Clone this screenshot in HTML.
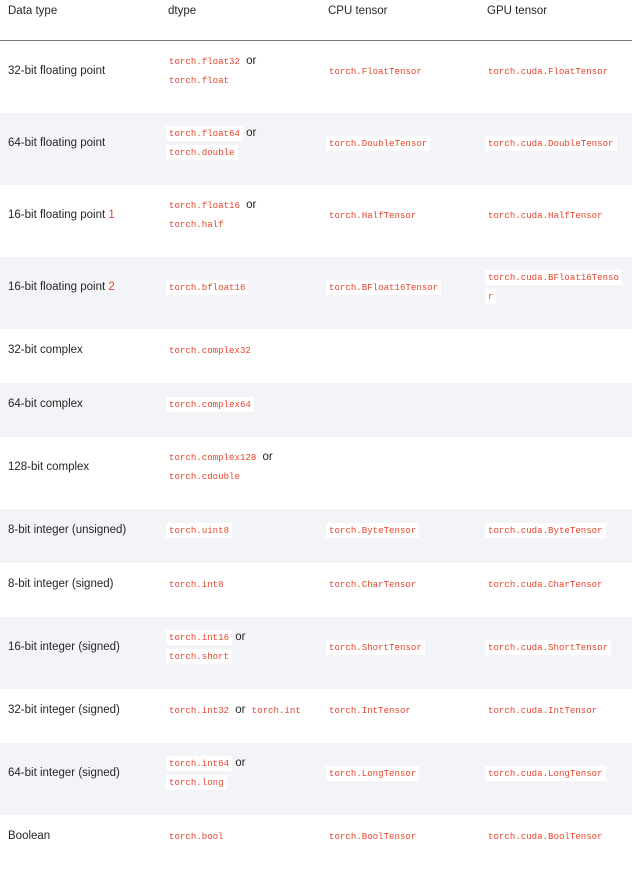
<!DOCTYPE html>
<html><head><meta charset="utf-8"><style>
*{margin:0;padding:0;box-sizing:border-box}
body{width:632px;height:862px;overflow:hidden;background:#fff;font-family:"Liberation Sans",sans-serif;font-size:11.5px;color:#262626}
.row{position:relative;width:632px}
.hdr{border-bottom:1px solid #7a7a7a}
.g{background:#f3f4f7}
.c1{position:absolute;left:8px;top:0;bottom:0}
.c2{position:absolute;left:166px;top:0;bottom:0}
.c3{position:absolute;left:326px;top:0;bottom:0}
.c4{position:absolute;left:485px;top:0;bottom:0;width:140px}
.cell{display:flex;flex-direction:column;justify-content:center;line-height:18px;padding-bottom:12px}
.hdr .cell{justify-content:flex-start;padding-top:2px;padding-bottom:0}
code{font-family:"Liberation Mono",monospace;font-size:9.1px;color:#e8452c;background:#fff;padding:2px 3px;font-weight:normal}
.fn{color:#e8452c}
</style></head><body>
<div class="row hdr" style="height:41px">
<div class="cell c1">Data type</div>
<div class="cell c2" style="left:168px">dtype</div>
<div class="cell c3" style="left:328px">CPU tensor</div>
<div class="cell c4" style="left:487px">GPU tensor</div>
</div>

<div class="row" style="height:72px">
<div class="cell c1">32-bit floating point</div>
<div class="cell c2"><span><code>torch.float32</code> or</span><span><code>torch.float</code></span></div>
<div class="cell c3"><span><code>torch.FloatTensor</code></span></div>
<div class="cell c4"><span><code>torch.cuda.FloatTensor</code></span></div>
</div>
<div class="row g" style="height:72px">
<div class="cell c1">64-bit floating point</div>
<div class="cell c2"><span><code>torch.float64</code> or</span><span><code>torch.double</code></span></div>
<div class="cell c3"><span><code>torch.DoubleTensor</code></span></div>
<div class="cell c4"><span><code>torch.cuda.DoubleTensor</code></span></div>
</div>
<div class="row" style="height:72px">
<div class="cell c1"><span>16-bit floating point <span class="fn">1</span></span></div>
<div class="cell c2"><span><code>torch.float16</code> or</span><span><code>torch.half</code></span></div>
<div class="cell c3"><span><code>torch.HalfTensor</code></span></div>
<div class="cell c4"><span><code>torch.cuda.HalfTensor</code></span></div>
</div>
<div class="row g" style="height:72px">
<div class="cell c1"><span>16-bit floating point <span class="fn">2</span></span></div>
<div class="cell c2"><span><code>torch.bfloat16</code></span></div>
<div class="cell c3"><span><code>torch.BFloat16Tensor</code></span></div>
<div class="cell c4"><span><code>torch.cuda.BFloat16Tenso</code></span><span><code>r</code></span></div>
</div>
<div class="row" style="height:54px">
<div class="cell c1">32-bit complex</div>
<div class="cell c2"><span><code>torch.complex32</code></span></div>
</div>
<div class="row g" style="height:54px">
<div class="cell c1">64-bit complex</div>
<div class="cell c2"><span><code>torch.complex64</code></span></div>
</div>
<div class="row" style="height:72px">
<div class="cell c1">128-bit complex</div>
<div class="cell c2"><span><code>torch.complex128</code> or</span><span><code>torch.cdouble</code></span></div>
</div>
<div class="row g" style="height:54px">
<div class="cell c1">8-bit integer (unsigned)</div>
<div class="cell c2"><span><code>torch.uint8</code></span></div>
<div class="cell c3"><span><code>torch.ByteTensor</code></span></div>
<div class="cell c4"><span><code>torch.cuda.ByteTensor</code></span></div>
</div>
<div class="row" style="height:54px">
<div class="cell c1">8-bit integer (signed)</div>
<div class="cell c2"><span><code>torch.int8</code></span></div>
<div class="cell c3"><span><code>torch.CharTensor</code></span></div>
<div class="cell c4"><span><code>torch.cuda.CharTensor</code></span></div>
</div>
<div class="row g" style="height:72px">
<div class="cell c1">16-bit integer (signed)</div>
<div class="cell c2"><span><code>torch.int16</code> or</span><span><code>torch.short</code></span></div>
<div class="cell c3"><span><code>torch.ShortTensor</code></span></div>
<div class="cell c4"><span><code>torch.cuda.ShortTensor</code></span></div>
</div>
<div class="row" style="height:54px">
<div class="cell c1">32-bit integer (signed)</div>
<div class="cell c2"><span><code>torch.int32</code> or <code>torch.int</code></span></div>
<div class="cell c3"><span><code>torch.IntTensor</code></span></div>
<div class="cell c4"><span><code>torch.cuda.IntTensor</code></span></div>
</div>
<div class="row g" style="height:72px">
<div class="cell c1">64-bit integer (signed)</div>
<div class="cell c2"><span><code>torch.int64</code> or</span><span><code>torch.long</code></span></div>
<div class="cell c3"><span><code>torch.LongTensor</code></span></div>
<div class="cell c4"><span><code>torch.cuda.LongTensor</code></span></div>
</div>
<div class="row" style="height:54px">
<div class="cell c1">Boolean</div>
<div class="cell c2"><span><code>torch.bool</code></span></div>
<div class="cell c3"><span><code>torch.BoolTensor</code></span></div>
<div class="cell c4"><span><code>torch.cuda.BoolTensor</code></span></div>
</div>
</body></html>
